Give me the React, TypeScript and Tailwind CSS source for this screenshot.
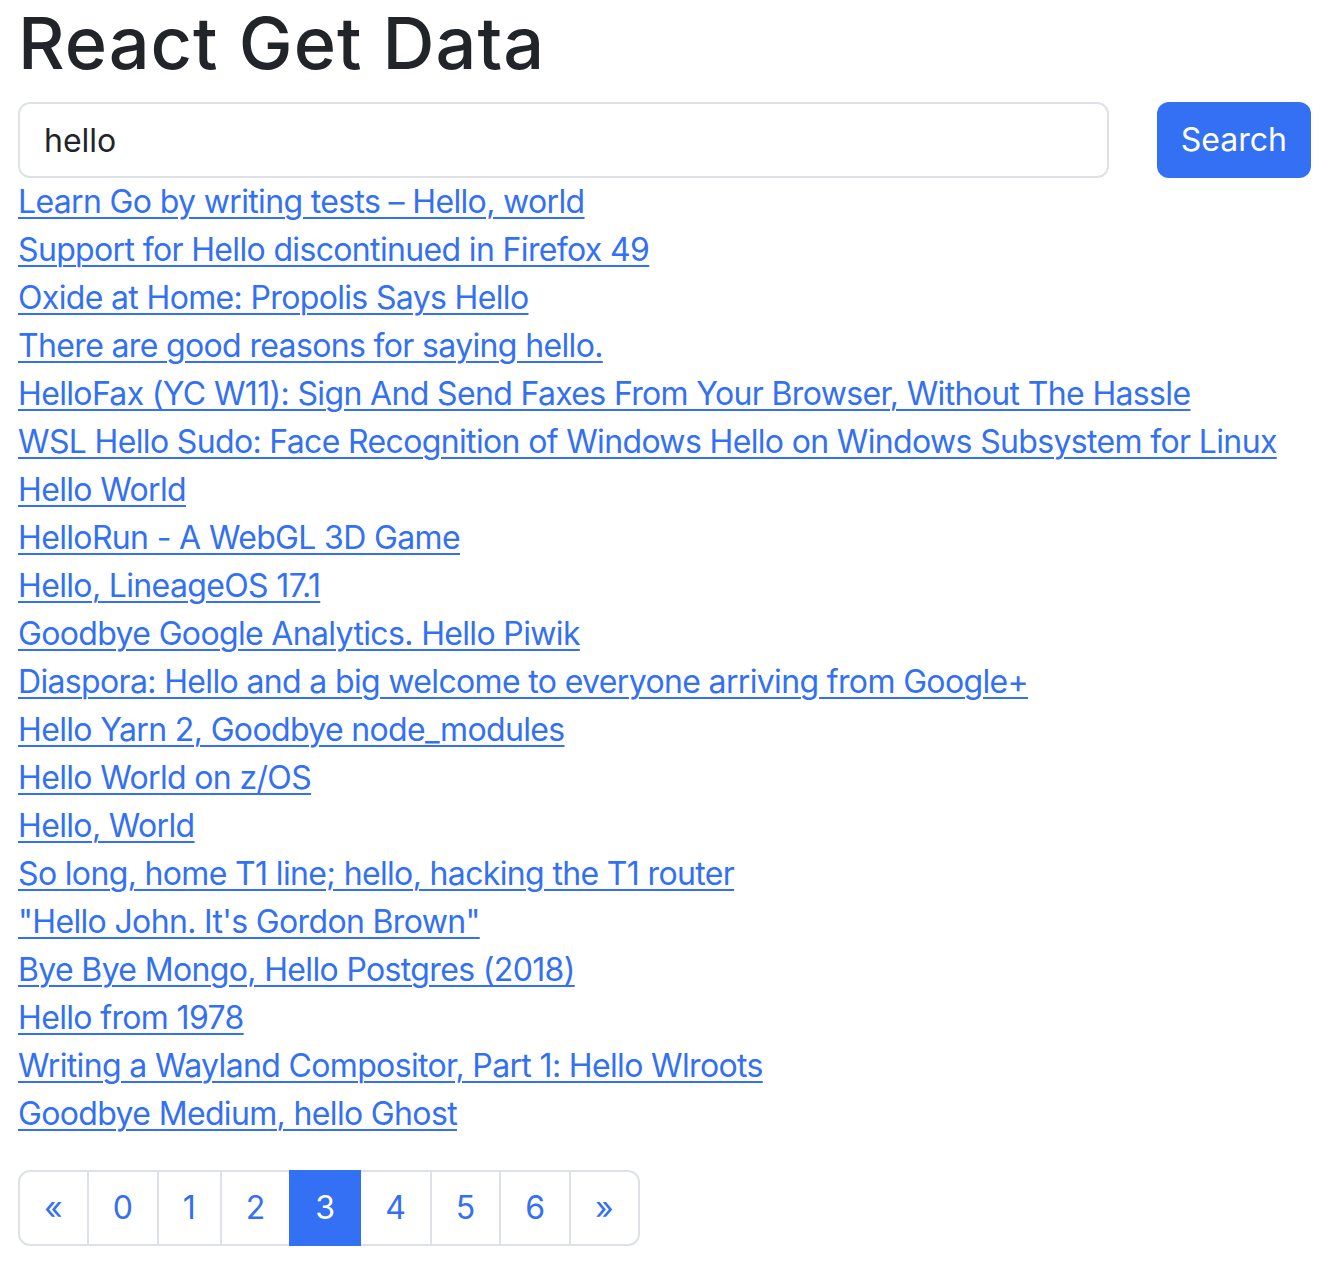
import React, { useState } from 'react';

const results = [
  'Learn Go by writing tests – Hello, world',
  'Support for Hello discontinued in Firefox 49',
  'Oxide at Home: Propolis Says Hello',
  'There are good reasons for saying hello.',
  'HelloFax (YC W11): Sign And Send Faxes From Your Browser, Without The Hassle',
  'WSL Hello Sudo: Face Recognition of Windows Hello on Windows Subsystem for Linux',
  'Hello World',
  'HelloRun - A WebGL 3D Game',
  'Hello, LineageOS 17.1',
  'Goodbye Google Analytics. Hello Piwik',
  'Diaspora: Hello and a big welcome to everyone arriving from Google+',
  'Hello Yarn 2, Goodbye node_modules',
  'Hello World on z/OS',
  'Hello, World',
  'So long, home T1 line; hello, hacking the T1 router',
  '"Hello John. It\'s Gordon Brown"',
  'Bye Bye Mongo, Hello Postgres (2018)',
  'Hello from 1978',
  'Writing a Wayland Compositor, Part 1: Hello Wlroots',
  'Goodbye Medium, hello Ghost',
];

const pages = ['«', '0', '1', '2', '3', '4', '5', '6', '»'];

const App: React.FC = () => {
  const [query, setQuery] = useState('hello');
  const [page, setPage] = useState(3);

  return (
    <div className="min-h-screen bg-white pl-[18px] pr-[29px] text-[#212529] font-['Inter','Helvetica_Neue',sans-serif]">
      <h1 className="text-[72px] leading-[86px] font-medium tracking-[1px] mb-4">React Get Data</h1>

      <div className="flex gap-12">
        <input
          value={query}
          onChange={(e) => setQuery(e.target.value)}
          className="flex-1 h-[76px] border-2 border-[#dee2e6] rounded-xl px-6 text-[32px] text-[#212529] outline-none"
        />
        <button className="h-[76px] px-6 rounded-xl bg-[#3370f4] text-white text-[32px]">Search</button>
      </div>

      <ul className="text-[32px] leading-[48px] tracking-[-0.65px]">
        {results.map((title) => (
          <li key={title}>
            <a href="#" className="text-[#3370f4] underline decoration-2 underline-offset-[4px]">
              {title}
            </a>
          </li>
        ))}
      </ul>

      <div className="mt-8 flex">
        {pages.map((p, i) => {
          const active = p === String(page);
          return (
            <button
              key={p}
              onClick={() => /^\d$/.test(p) && setPage(Number(p))}
              className={
                'h-[76px] px-6 text-[32px] border-2 ' +
                (i > 0 ? '-ml-[2px] ' : '') +
                (i === 0 ? 'rounded-l-xl ' : '') +
                (i === pages.length - 1 ? 'rounded-r-xl ' : '') +
                (active
                  ? 'relative z-10 bg-[#3370f4] border-[#3370f4] text-white'
                  : 'bg-white border-[#dee2e6] text-[#3370f4]')
              }
            >
              {p}
            </button>
          );
        })}
      </div>
    </div>
  );
};

export default App;
